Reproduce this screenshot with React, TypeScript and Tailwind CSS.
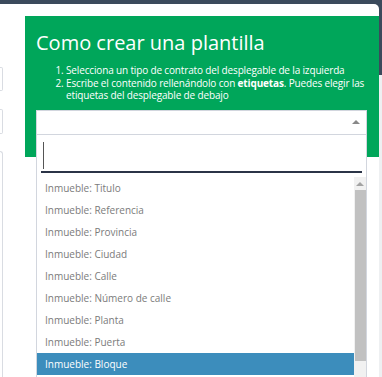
const options = [
  "Inmueble: Titulo",
  "Inmueble: Referencia",
  "Inmueble: Provincia",
  "Inmueble: Ciudad",
  "Inmueble: Calle",
  "Inmueble: Número de calle",
  "Inmueble: Planta",
  "Inmueble: Puerta",
  "Inmueble: Bloque",
];

export default function App() {
  return (
    <div className="w-[382px] h-[377px] overflow-hidden flex bg-[#3b4a5c] font-['Open_Sans',sans-serif]">
      <div className="w-[379px] flex flex-col">
        <div className="h-[4px] shrink-0" />
        <div className="flex-1 bg-white rounded-tr-[5px] flex items-start relative">
          {/* left column, mostly off screen */}
          <div className="w-[3px] self-stretch flex flex-col">
            <div className="mt-[63px] h-[24px] bg-white border border-l-0 border-[#d9dce2] rounded-r-[2px]" />
            <div className="mt-[18px] h-[25px] bg-white border border-l-0 border-[#d9dce2] rounded-r-[2px]" />
            <div className="mt-[17px] flex-1 bg-white border-t border-r border-[#d9dce2] rounded-tr-[3px]" />
          </div>

          {/* callout */}
          <div className="ml-[22px] mt-[12px] w-[354px] bg-[#00a65a] text-white pl-[11px] pr-[12px] pt-[14px] pb-[23px] relative">
            <h4 className="text-[20px] leading-[26px] font-normal">Como crear una plantilla</h4>
            <ol className="list-decimal pl-[30px] mt-[8px] text-[10px] leading-[12.5px] tracking-[-0.15px]">
              <li>Selecciona un tipo de contrato del desplegable de la izquierda</li>
              <li>
                Escribe el contenido rellenándolo con <b className="font-bold">etiquetas</b>. Puedes elegir las
                etiquetas del desplegable de debajo
              </li>
            </ol>
            <div className="mt-[8px] h-[24px] bg-white border border-[#d2d6de] border-b-0 flex items-center justify-end pr-[6px]">
              <span className="w-0 h-0 border-x-[4px] border-x-transparent border-b-[4px] border-b-[#888]" />
            </div>

            {/* open dropdown */}
            <div className="absolute left-[11px] top-[118px] w-[331px] h-[243px] bg-white border border-b-0 border-[#d2d6de] flex flex-col">
              <div className="p-[4px]">
                <div className="h-[34px] border-b-2 border-[#2b3447] flex items-center pl-[2px]">
                  <span className="w-px h-[27px] bg-[#555]" />
                </div>
              </div>
              <div className="flex-1 flex">
                <ul className="flex-1 text-[10px]">
                  {options.map((o) => (
                    <li
                      key={o}
                      className={
                        o === "Inmueble: Bloque"
                          ? "h-[22px] pl-[8px] flex items-center bg-[#3c8dbc] text-white"
                          : "h-[22px] pl-[8px] flex items-center text-[#7b7b7b]"
                      }
                    >
                      {o}
                    </li>
                  ))}
                </ul>
                <div className="w-[12px] bg-[#f1f1f1] flex flex-col">
                  <div className="h-[13px] flex items-center justify-center">
                    <span className="w-0 h-0 border-x-[4px] border-x-transparent border-b-[4px] border-b-[#a3a3a3]" />
                  </div>
                  <div className="h-[171px] bg-[#c1c1c1] ml-px" />
                </div>
              </div>
            </div>
          </div>
        </div>
      </div>
      <div className="w-[3px] flex flex-col">
        <div className="h-[75px] bg-[#3b4a5c]" />
        <div className="flex-1 bg-[#eef0f2]" />
      </div>
    </div>
  );
}
